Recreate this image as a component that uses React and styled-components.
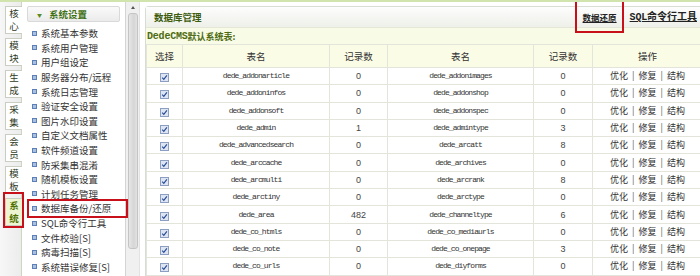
import React from "react";
import styled, { createGlobalStyle } from "styled-components";

const GlobalStyle = createGlobalStyle`
   html, body {
      margin: 0;
      padding: 0;
      background: #fff;
   }
   body {
      width: 700px;
      height: 276px;
      overflow: hidden;
      font-family: "Noto Sans CJK SC", "Liberation Sans", sans-serif;
      color: #333;
   }
`;

const tabs = ["核心", "模块", "生成", "采集", "会员", "模板", "系统"];

const menuItems = [
   "系统基本参数",
   "系统用户管理",
   "用户组设定",
   "服务器分布/远程",
   "系统日志管理",
   "验证安全设置",
   "图片水印设置",
   "自定义文档属性",
   "软件频道设置",
   "防采集串混淆",
   "随机模板设置",
   "计划任务管理",
   "数据库备份/还原",
   "SQL命令行工具",
   "文件校验[S]",
   "病毒扫描[S]",
   "系统错误修复[S]",
];

const rows = [
   ["dede_addonarticle", "0", "dede_addonimages", "0"],
   ["dede_addoninfos", "0", "dede_addonshop", "0"],
   ["dede_addonsoft", "0", "dede_addonspec", "0"],
   ["dede_admin", "1", "dede_admintype", "3"],
   ["dede_advancedsearch", "0", "dede_arcatt", "8"],
   ["dede_arccache", "0", "dede_archives", "0"],
   ["dede_arcmulti", "0", "dede_arcrank", "8"],
   ["dede_arctiny", "0", "dede_arctype", "0"],
   ["dede_area", "482", "dede_channeltype", "6"],
   ["dede_co_htmls", "0", "dede_co_mediaurls", "0"],
   ["dede_co_note", "0", "dede_co_onepage", "3"],
   ["dede_co_urls", "0", "dede_diyforms", "0"],
];

const CheckBox = () => (
   <svg width="9" height="9" viewBox="0 0 9 9">
      <rect x="0.5" y="0.5" width="8" height="8" fill="#dde5f3" stroke="#8c9fc2" />
      <path d="M2.2 4.6 L3.8 6.3 L6.9 2.3" fill="none" stroke="#2b4c96" strokeWidth="1.2" />
   </svg>
);

const App = () => {
   return (
      <>
         <GlobalStyle />
         <Page>
            <TabStrip>
               {tabs.map((t) => (
                  <Tab key={t} active={t === "系统"}>
                     <span>{t[0]}</span>
                     <span>{t[1]}</span>
                  </Tab>
               ))}
            </TabStrip>

            <Menu>
               <MenuHeader>
                  <Arrow>▼</Arrow>
                  系统设置
               </MenuHeader>
               <MenuList>
                  {menuItems.map((m) => (
                     <MenuItem key={m} marked={m === "数据库备份/还原"}>
                        <Bullet />
                        {m}
                     </MenuItem>
                  ))}
               </MenuList>
            </Menu>

            <ScrollBar>
               <ScrollArrow />
               <ScrollThumb />
            </ScrollBar>

            <Main>
               <MainHeader>
                  <Title>数据库管理</Title>
                  <Links>
                     <HeadLink marked size={8.5}>
                        数据还原
                     </HeadLink>
                     <HeadLink size={10}>
                        <Mono>SQL</Mono>命令行工具
                     </HeadLink>
                  </Links>
               </MainHeader>
               <SubHeader>
                  <Mono>DedeCMS</Mono>默认系统表:
               </SubHeader>
               <Table>
                  <colgroup>
                     <col style={{ width: 36 }} />
                     <col style={{ width: 147 }} />
                     <col style={{ width: 58 }} />
                     <col style={{ width: 146 }} />
                     <col style={{ width: 59 }} />
                     <col style={{ width: 110 }} />
                  </colgroup>
                  <thead>
                     <tr>
                        <Th>选择</Th>
                        <Th>表名</Th>
                        <Th>记录数</Th>
                        <Th>表名</Th>
                        <Th>记录数</Th>
                        <Th>操作</Th>
                     </tr>
                  </thead>
                  <tbody>
                     {rows.map((r) => (
                        <Row key={r[0]}>
                           <Td>
                              <CheckBox />
                           </Td>
                           <NameCell>{r[0]}</NameCell>
                           <NumCell>{r[1]}</NumCell>
                           <NameCell>{r[2]}</NameCell>
                           <NumCell>{r[3]}</NumCell>
                           <OpCell>
                              优化<Pipe>|</Pipe>修复<Pipe>|</Pipe>结构
                           </OpCell>
                        </Row>
                     ))}
                     <Row>
                        <Td />
                        <Td />
                        <Td />
                        <Td />
                        <Td />
                        <Td />
                     </Row>
                  </tbody>
               </Table>
            </Main>
         </Page>
      </>
   );
};

export default App;

const Page = styled.div`
   display: flex;
   width: 700px;
   height: 276px;
   border-top: 2px solid #d2e4ad;
   box-sizing: border-box;
   overflow: hidden;
`;

const TabStrip = styled.div`
   width: 22px;
   flex-shrink: 0;
   display: flex;
   flex-direction: column;
   gap: 4px;
   padding: 4px 0 0 5px;
   box-sizing: border-box;
   background: linear-gradient(to right, #f7f7f7, #ececec);
   border-right: 1px solid #cdd6bf;
`;

const Tab = styled.div`
   position: relative;
   width: 17px;
   height: 28px;
   box-sizing: border-box;
   display: flex;
   flex-direction: column;
   align-items: center;
   justify-content: center;
   font-size: 9.5px;
   line-height: 13px;
   color: ${(p) => (p.active ? "#4d7000" : "#2f3a24")};
   font-weight: ${(p) => (p.active ? 700 : 400)};
   background: ${(p) => (p.active ? "#eef5d3" : "#fff")};
   border: 1px solid #c9cdc2;
   border-right: none;

   &::after {
      content: "";
      display: ${(p) => (p.active ? "block" : "none")};
      position: absolute;
      left: -3px;
      right: -2px;
      top: -7px;
      bottom: -3px;
      border: 2px solid #c8101b;
   }
`;

const Menu = styled.div`
   width: 104px;
   flex-shrink: 0;
   padding: 4px 5px 0 5px;
   box-sizing: border-box;
   background: #fff;
   border-right: 1px solid #d4d4d4;
`;

const MenuHeader = styled.div`
   height: 16px;
   box-sizing: border-box;
   display: flex;
   align-items: center;
   gap: 7px;
   padding-left: 9px;
   font-size: 9.5px;
   font-weight: 700;
   color: #3f7014;
   background: linear-gradient(#fafafa, #ebebeb);
   border: 1px solid #d9d9d9;
   border-radius: 2px;
`;

const Arrow = styled.span`
   font-size: 5px;
   color: #5a8a1e;
`;

const MenuList = styled.div`
   margin-top: 4px;
   padding-left: 5px;
`;

const MenuItem = styled.div`
   position: relative;
   display: flex;
   align-items: center;
   gap: 4px;
   height: 14.6px;
   font-size: 9.5px;
   color: #333;
   white-space: nowrap;

   &::after {
      content: "";
      display: ${(p) => (p.marked ? "block" : "none")};
      position: absolute;
      left: -5px;
      right: -8px;
      top: -2px;
      bottom: -2px;
      border: 2px solid #c8101b;
   }
`;

const Bullet = styled.span`
   width: 3px;
   height: 3px;
   border: 1px solid #5b7fb6;
   background: #a9c0e0;
   flex-shrink: 0;
`;

const ScrollBar = styled.div`
   width: 14px;
   flex-shrink: 0;
   display: flex;
   flex-direction: column;
   align-items: center;
   background: #f0f0f0;
   border-right: 1px solid #e2e2e2;
   box-sizing: border-box;
   padding-top: 4px;
`;

const ScrollArrow = styled.span`
   width: 0;
   height: 0;
   border-left: 2px solid transparent;
   border-right: 2px solid transparent;
   border-bottom: 3px solid #555;
   margin-bottom: 4px;
`;

const ScrollThumb = styled.span`
   width: 10px;
   height: 236px;
   box-sizing: border-box;
   border: 1px solid #c4c4c4;
   border-radius: 3px;
   background: linear-gradient(to right, #e6e6e6, #d6d6d6 60%, #e2e2e2);
`;

const Main = styled.div`
   flex: 1;
   min-width: 0;
   margin: 4px 0 0 5px;
   border-left: 1px solid #d9dcd3;
   border-top: 1px solid #d9dcd3;
   border-top-left-radius: 4px;
`;

const MainHeader = styled.div`
   height: 20px;
   display: flex;
   align-items: center;
   justify-content: space-between;
   padding: 0 3px 0 8px;
   background: linear-gradient(#fdfdfd, #eef0e9);
   border-bottom: 1px solid #e3e7d8;
`;

const Title = styled.div`
   font-size: 9.5px;
   font-weight: 700;
   color: #3d5c10;
`;

const Links = styled.div`
   display: flex;
   align-items: center;
   gap: 13px;
`;

const HeadLink = styled.span`
   position: relative;
   font-size: ${(p) => p.size}px;
   line-height: 12px;
   font-weight: 700;
   color: #222;
   text-decoration: underline;

   &::after {
      content: "";
      display: ${(p) => (p.marked ? "block" : "none")};
      position: absolute;
      left: -8px;
      right: -7px;
      top: -14px;
      bottom: -10px;
      border: 2px solid #c8101b;
   }
`;

const SubHeader = styled.div`
   height: 16px;
   display: flex;
   align-items: center;
   padding-left: 1px;
   font-size: 9px;
   font-weight: 700;
   color: #4f6c12;
   background: #f8fbe6;
`;

const Mono = styled.span`
   font-family: "Liberation Mono", monospace;
   font-size: 10px;
   letter-spacing: -0.2px;
`;

const Table = styled.table`
   border-collapse: collapse;
   table-layout: fixed;
   width: 556px;
`;

const Th = styled.th`
   height: 22px;
   padding: 0;
   font-size: 9.5px;
   font-weight: 400;
   color: #333;
   background: #fbfce6;
   border: 1px solid #e3e5da;
   text-align: center;
`;

const Row = styled.tr`
   height: 17.3px;
   background: #fff;
`;

const Td = styled.td`
   padding: 0;
   border: 1px solid #e3e5da;
   text-align: center;
   vertical-align: middle;
   line-height: 10px;
`;

const NameCell = styled(Td)`
   font-family: "Liberation Mono", monospace;
   font-size: 8px;
   letter-spacing: -0.9px;
   color: #333;
`;

const NumCell = styled(Td)`
   font-family: "Liberation Sans", sans-serif;
   font-size: 9px;
   color: #444;
`;

const OpCell = styled(Td)`
   font-size: 9px;
   color: #333;
   white-space: nowrap;
`;

const Pipe = styled.span`
   margin: 0 4px;
   color: #555;
`;
